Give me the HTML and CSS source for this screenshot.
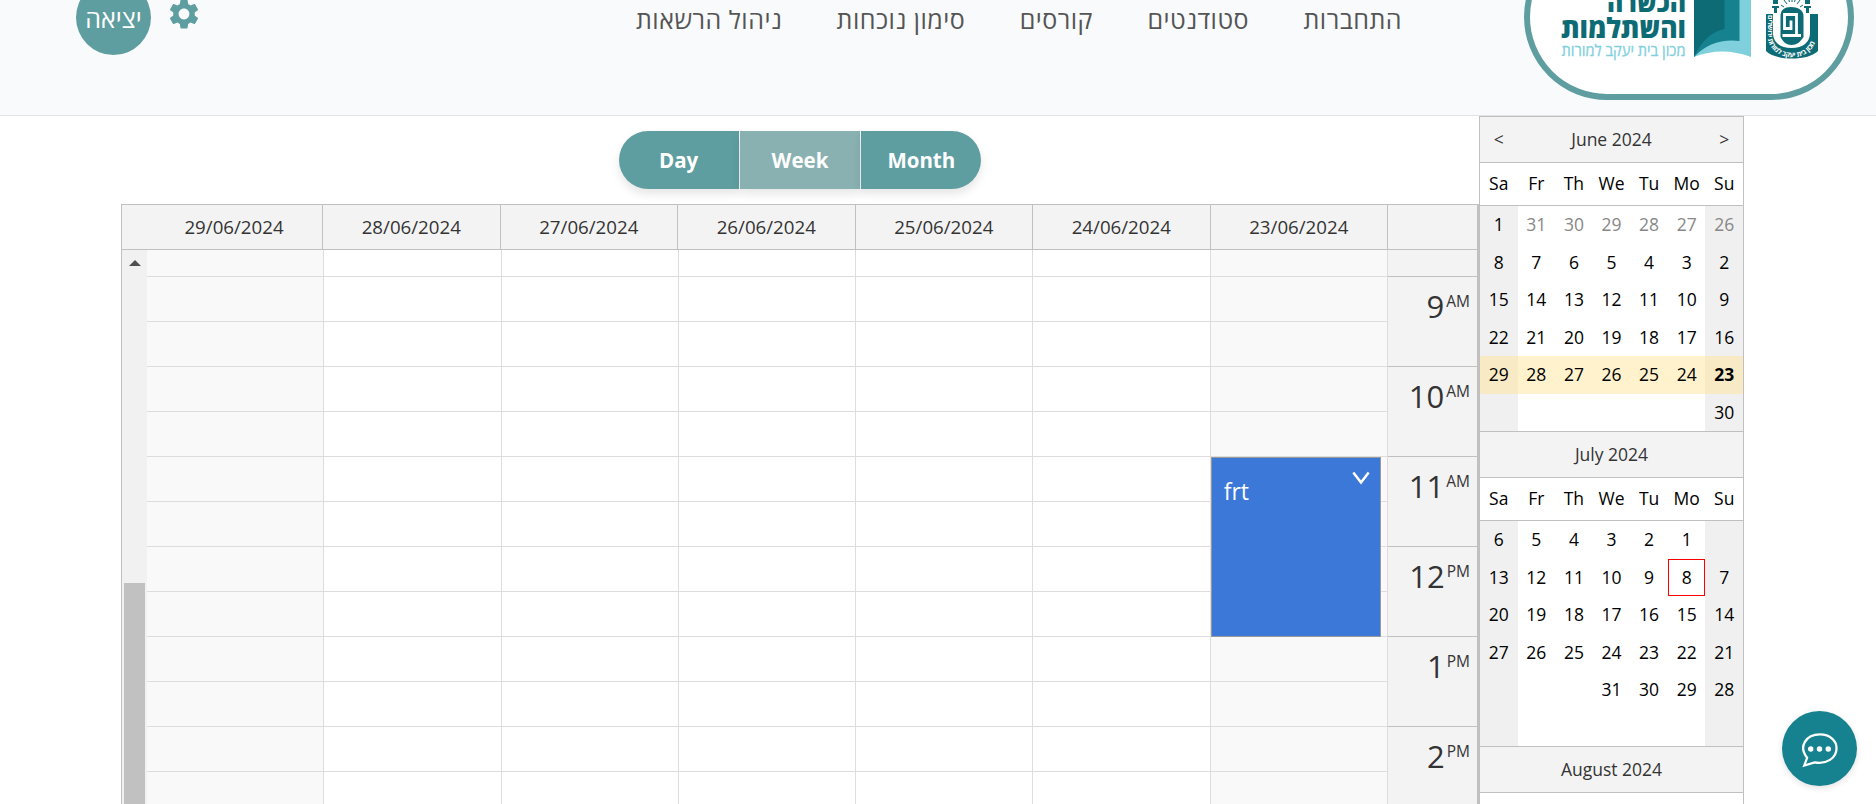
FILE: index.html
```html
<!DOCTYPE html>
<html lang="he">
<head>
<meta charset="utf-8">
<title>Schedule</title>
<link rel="stylesheet" href="styles.css">
</head>
<body>
<header class="topbar">
  <div class="user">
    <button class="exit"><span>יציאה</span></button>
    <svg class="gear" viewBox="0 0 24 24"><path d="M19.14 12.94c.04-.3.06-.61.06-.94 0-.32-.02-.64-.07-.94l2.03-1.58c.18-.14.23-.41.12-.61l-1.92-3.32c-.12-.22-.37-.29-.59-.22l-2.39.96c-.5-.38-1.03-.7-1.62-.94l-.36-2.54c-.04-.24-.24-.41-.48-.41h-3.84c-.24 0-.43.17-.47.41l-.36 2.54c-.59.24-1.13.57-1.62.94l-2.39-.96c-.22-.08-.47 0-.59.22L2.74 8.87c-.12.21-.08.47.12.61l2.03 1.58c-.05.3-.09.63-.09.94s.02.64.07.94l-2.03 1.58c-.18.14-.23.41-.12.61l1.92 3.32c.12.22.37.29.59.22l2.39-.96c.5.38 1.03.7 1.62.94l.36 2.54c.05.24.24.41.48.41h3.84c.24 0 .44-.17.47-.41l.36-2.54c.59-.24 1.13-.56 1.62-.94l2.39.96c.22.08.47 0 .59-.22l1.92-3.32c.12-.22.07-.47-.12-.61l-2.01-1.58zM12 15.6c-1.98 0-3.6-1.62-3.6-3.6s1.62-3.6 3.6-3.6 3.6 1.62 3.6 3.6-1.62 3.6-3.6 3.6z"/></svg>
  </div>
  <nav class="nav" dir="rtl">
    <a>התחברות</a><a>סטודנטים</a><a>קורסים</a><a>סימון נוכחות</a><a>ניהול הרשאות</a>
  </nav>
  <div class="logo">
    <svg viewBox="1524 -66 330 166" width="330" height="166">
      <g font-family="Open Sans, DejaVu Sans, sans-serif" direction="rtl" text-anchor="start">
        <text x="1686" y="12" font-size="27" font-weight="800" fill="#0d6b75" textLength="79" lengthAdjust="spacingAndGlyphs">הכשרה</text>
        <text x="1686" y="37.500" font-size="28" font-weight="800" fill="#0d6b75" textLength="125" lengthAdjust="spacingAndGlyphs">והשתלמות</text>
        <text x="1685.500" y="55.500" font-size="16" fill="#7fd0dc" stroke="#7fd0dc" stroke-width=".3" textLength="124" lengthAdjust="spacingAndGlyphs">מכון בית יעקב למורות</text>
      </g>
      <path fill="#7fd0dc" d="M1694-40H1751V57Q1722 46 1694 57Z"/>
      <path fill="#16828f" d="M1694-40H1739.500V41Q1712 38 1694 57Z"/>
      <path fill="#0d6b75" d="M1694-40H1724.500V29Q1705 33 1694 57Z"/>
      <g fill="#0d6b75">
        <path d="M1766 14h7v19c0 9 7 15 18.500 15s18.500-6 18.500-15V14h8v37c-5 5-15 7.500-26 7.500s-21-2.500-26-7.500z"/>
        <path d="M1780.500 37V16c0-6 4-9 10.500-9s12.500 3 12.500 9v21c-3 5-7 8-12 8s-8.500-3-11-8z"/>
        <path d="M1773-10h5v14h-5zM1805-10h5v14h-5zM1772 6h7v2h-7zM1804 6h7v2h-7zM1774 8h3v5h-3zM1806 8h3v5h-3z"/>
      </g>
      <path d="M1782.500 35.500h18.500M1796.500 35.500V14.500h-12v14h6.500v-8" fill="none" stroke="#fff" stroke-width="2.800"/>
      <path d="M1781 5l3 2M1784 0l3 4M1788-3l1.500 5M1792-3v5M1796-3l-1.500 5M1800 0l-3 4M1803 5l-3 2" stroke="#0d6b75"/>
      <defs><path id="seal" d="M1767.500 15V34C1767.500 65 1816.500 65 1816.500 34V15"/></defs>
      <text font-family="Open Sans, DejaVu Sans, sans-serif" font-size="7" font-weight="700" fill="#fff"><textPath href="#seal" textLength="86">מכון בית יעקב למורות ירושלים</textPath></text>
    </svg>
  </div>
</header>

<main class="main">
  <section class="planner">
    <div class="views"><button>Day</button><button class="on">Week</button><button>Month</button></div>
    <div class="board">
      <div class="heads">
        <div class="first">29/06/2024</div><div>28/06/2024</div><div>27/06/2024</div><div>26/06/2024</div><div>25/06/2024</div><div>24/06/2024</div><div>23/06/2024</div><div class="corner"></div>
      </div>
      <div class="grid">
        <div class="scroll"><svg class="up" viewBox="0 0 12 6"><path d="M0 6L6 0L12 6Z"/></svg><i class="thumb"></i></div>
        <div class="col off"></div><div class="col"></div><div class="col"></div><div class="col"></div><div class="col"></div><div class="col"></div>
        <div class="col off">
          <div class="event">frt<svg viewBox="0 0 18 14"><path d="M1.300 1.500L9 11.500L16.700 1.500"/></svg></div>
        </div>
        <div class="hours">
          <div class="stub"></div>
          <div class="hour">9<sup>AM</sup></div><div class="hour">10<sup>AM</sup></div><div class="hour">11<sup>AM</sup></div><div class="hour">12<sup>PM</sup></div><div class="hour">1<sup>PM</sup></div><div class="hour">2<sup>PM</sup></div>
        </div>
      </div>
    </div>
  </section>
  <aside class="months" id="months"></aside>
</main>

<button class="chat"><svg viewBox="0 0 40 38"><path d="M4.300 34.500L7.300 26.500C-2 15 6 2.500 20.500 2.500C31 2.500 37.500 9 37.500 16.700C37.500 27 27 33.500 15 31.200Z"/><g><circle cx="11" cy="17.500" r="2.800"/><circle cx="20" cy="17.500" r="2.800"/><circle cx="29" cy="17.500" r="2.800"/></g></svg></button>
<script src="calendar.js"></script>
</body>
</html>
```
FILE: styles.css
```css
* { box-sizing: border-box; }
body { margin: 0; height: 804px; overflow: hidden; background: #fff; font-family: "Open Sans", "Noto Sans", sans-serif; color: #333; }
button { font: inherit; border: 0; padding: 0; }

.topbar { height: 116px; display: flex; background: #f8fafc; border-bottom: 1px solid #e0e4e8; padding: 0 22px 0 76px; overflow: hidden; }
.user { display: flex; gap: 15px; width: 560px; flex: none; }
.exit { width: 75px; height: 75px; margin-top: -20px; border-radius: 50%; background: #5f9ea0; color: #fff; font-size: 25px; }
.exit span { display: block; margin-top: 1px; }
.gear { width: 36px; height: 36px; margin-top: -4px; fill: #5f9ea0; }
.nav { width: 766px; display: flex; justify-content: space-between; font-size: 25px; letter-spacing: .5px; line-height: 38px; color: #555; white-space: nowrap; }
.logo { width: 330px; height: 166px; margin: -66px 0 0 auto; border: 6px solid #5f9ea0; border-radius: 83px; background: #fff; flex: none; }
.logo svg { display: block; margin: -6px; }

.main { display: flex; height: 688px; padding-left: 121px; }
.planner { width: 1358px; padding-top: 15px; display: flex; flex-direction: column; align-items: center; }
.views { display: flex; gap: 1px; height: 58px; margin: 0 0 15px; }
.views button { width: 120.330px; background: #5f9ea0; color: #fff; font-size: 20.500px; font-weight: 700; box-shadow: 0 5px 10px rgba(0,0,0,.1); }
.views button:first-child { border-radius: 29px 0 0 29px; }
.views button:last-child { border-radius: 0 29px 29px 0; }
.views .on { background: #89b1b1; }

.board { width: 1358px; flex: 1; display: flex; flex-direction: column; border: 1px solid #c0c0c0; border-width: 1px 2px 0 1px; min-height: 0; overflow: hidden; }
.heads { display: grid; grid-template-columns: 201px repeat(6, 1fr) 89px; height: 45px; flex: none; background: #f3f3f3; border-bottom: 1px solid #c0c0c0; font-size: 18.700px; line-height: 43px; text-align: center; }
.heads div { border-right: 1px solid #c0c0c0; }
.heads .first { padding-left: 24px; }
.heads .corner { border: 0; }
.grid { display: grid; grid-template-columns: 25px repeat(7, 1fr) 89px; height: 555px; }
.scroll { background: #f1f1f1; display: flex; flex-direction: column; align-items: center; }
.up { margin-top: 10px; width: 12px; height: 6px; fill: #505050; flex: none; }
.thumb { margin-top: 317px; width: 21px; flex: 1; background: #c1c1c1; }
.col { border-right: 1px solid #ddd; background: repeating-linear-gradient(#ddd 0 1px, transparent 1px 45px) 0 26px no-repeat; }
.off { background-color: #f9f9f9; }
.event { position: relative; margin: 207px 6px 0 0; height: 180px; background: #3c78d8; border: 1px solid #999; color: #fff; font-size: 23px; padding: 18px 12px; line-height: 30px; }
.event svg { position: absolute; right: 10px; top: 13px; width: 18px; height: 14px; fill: none; stroke: #fff; stroke-width: 2.500; }
.hours { background: #f3f3f3; overflow: hidden; }
.stub { height: 26px; }
.hour { height: 90px; border-top: 1px solid #c0c0c0; display: flex; justify-content: flex-end; padding: 8px 7px 0 0; font-size: 31px; line-height: 43px; }
.hour sup { font-size: 15.500px; line-height: 32px; margin-left: 2px; vertical-align: baseline; }

.months { width: 265px; border: 1px solid #c0c0c0; border-bottom: 0; font-size: 17.500px; text-align: center; overflow: hidden; }
.title { height: 46px; display: grid; grid-template-columns: 1fr 5fr 1fr; line-height: 45px; background: #f3f3f3; border-bottom: 1px solid #c0c0c0; }
.names, .week { display: grid; grid-template-columns: repeat(7, 1fr); color: #000; }
.names { height: 43px; line-height: 41px; border-bottom: 1px solid #c0c0c0; }
.weeks { border-bottom: 1px solid #c0c0c0; }
.week { height: 37.500px; line-height: 37.500px; }
.week span:first-child, .week span:last-child { background: #f0f0f0; }
.week.sel span { background: #fff2cc; }
.week.sel span:first-child, .week.sel span:last-child { background: #f7eac5; }
.week .dim { color: #888; }
.week .bold { font-weight: 700; }
.week .today { border: 1px solid #f00; line-height: 35.500px; }

.chat { position: fixed; left: 1782px; top: 711px; width: 75px; height: 75px; border-radius: 50%; background: #17828f; box-shadow: 0 2px 6px rgba(0,0,0,.12); }
.chat svg { display: block; width: 39px; height: 37px; margin: 4px auto 0; fill: none; stroke: #fff; stroke-width: 2.300; }
.chat g { fill: #fff; stroke: none; }
```
FILE: calendar.js
```js
const months = [
  { name: 'June 2024', arrows: true, selected: 4, rows: ['1 -31 -30 -29 -28 -27 -26', '8 7 6 5 4 3 2', '15 14 13 12 11 10 9', '22 21 20 19 18 17 16', '29 28 27 26 25 24 *23', '_ _ _ _ _ _ 30'] },
  { name: 'July 2024', rows: ['6 5 4 3 2 1 _', '13 12 11 10 9 !8 7', '20 19 18 17 16 15 14', '27 26 25 24 23 22 21', '_ _ _ 31 30 29 28', '_ _ _ _ _ _ _'] },
  { name: 'August 2024', rows: [] }
];
const flags = { '-': 'dim', '*': 'bold', '!': 'today' };
const cell = t => t === '_' ? '<span></span>'
  : flags[t[0]] ? `<span class="${flags[t[0]]}">${t.slice(1)}</span>` : `<span>${t}</span>`;
document.getElementById('months').innerHTML = months.map(m =>
  `<div class="title"><span>${m.arrows ? '&lt;' : ''}</span><span>${m.name}</span><span>${m.arrows ? '&gt;' : ''}</span></div>` +
  (m.rows.length ? `<div class="names">${'Sa Fr Th We Tu Mo Su'.split(' ').map(d => `<span>${d}</span>`).join('')}</div><div class="weeks">` +
    m.rows.map((r, i) => `<div class="week${i === m.selected ? ' sel' : ''}">${r.split(' ').map(cell).join('')}</div>`).join('') + '</div>' : '')
).join('');
```
